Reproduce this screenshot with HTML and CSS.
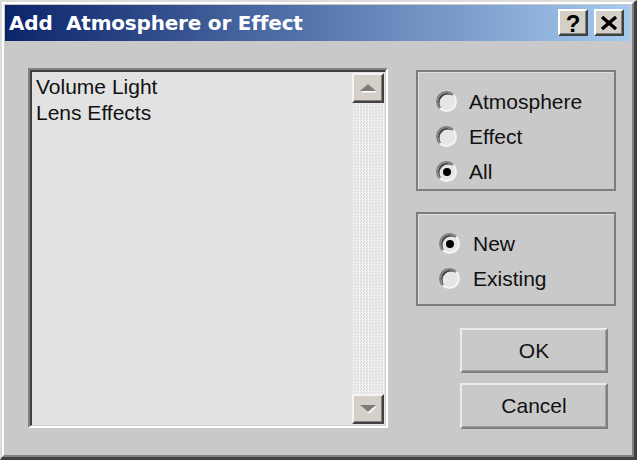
FILE: index.html
```html
<!DOCTYPE html>
<html>
<head>
<meta charset="utf-8">
<link rel="stylesheet" href="styles.css">
</head>
<body>
<div class="window">
  <div class="frame">
    <div class="titlebar">
      <span class="title">Add  Atmosphere or Effect</span>
      <div class="tbtns">
        <div class="tbtn help">?</div>
        <div class="tbtn close">
          <svg width="18" height="14" viewBox="0 0 18 14"><path d="M2 1 L16 13 M16 1 L2 13" stroke="#000" stroke-width="3.4" fill="none"/></svg>
        </div>
      </div>
    </div>
    <div class="body">
      <div class="listbox">
        <div class="listinner">
          <div class="items">
            <div class="item">Volume Light</div>
            <div class="item">Lens Effects</div>
          </div>
          <div class="scrollbar">
            <div class="sbtn">
              <svg width="18" height="9" viewBox="0 0 18 9"><polygon points="2,8.5 10,1.5 18,8.5" fill="#fff"/><polygon points="1,7 9,0 17,7" fill="#7c7c7c"/></svg>
            </div>
            <div class="track"></div>
            <div class="sbtn">
              <svg width="18" height="9" viewBox="0 0 18 9"><polygon points="2,1.5 18,1.5 10,8.5" fill="#fff"/><polygon points="1,0 17,0 9,7" fill="#7c7c7c"/></svg>
            </div>
          </div>
        </div>
      </div>
      <div class="side">
        <div class="group g1">
          <div class="row"><span class="radio"></span><span class="label">Atmosphere</span></div>
          <div class="row"><span class="radio"></span><span class="label">Effect</span></div>
          <div class="row"><span class="radio checked"></span><span class="label">All</span></div>
        </div>
        <div class="group g2">
          <div class="row"><span class="radio checked"></span><span class="label">New</span></div>
          <div class="row"><span class="radio"></span><span class="label">Existing</span></div>
        </div>
        <div class="btn ok">OK</div>
        <div class="btn cancel">Cancel</div>
      </div>
    </div>
  </div>
</div>
</body>
</html>
```
FILE: styles.css
```css
html, body {
  margin: 0;
  padding: 0;
  background: #c9c9c9;
}

.window {
  width: 637px;
  height: 460px;
  box-sizing: border-box;
  border-style: solid;
  border-width: 2px 3px 3px 2px;
  border-color: #dcdcdc #404040 #404040 #dcdcdc;
  background: #c9c9c9;
  font-family: "Liberation Sans", Arial, sans-serif;
  color: #000;
}

.frame {
  height: 100%;
  box-sizing: border-box;
  border: 2px solid;
  border-color: #ffffff #808080 #808080 #ffffff;
  padding: 1px 2px 0 1px;
  display: flex;
  flex-direction: column;
}

.titlebar {
  height: 36px;
  flex: none;
  display: flex;
  justify-content: space-between;
  align-items: flex-start;
  background: linear-gradient(to right, #0a246a, #a6caf0);
  padding: 0 6px 0 4px;
  box-sizing: border-box;
}

.title {
  font-family: "DejaVu Sans", Verdana, sans-serif;
  font-weight: bold;
  font-size: 20px;
  letter-spacing: -0.2px;
  line-height: 36px;
  color: #fff;
  white-space: pre;
}

.tbtns {
  display: flex;
  gap: 6px;
  margin-top: 4px;
}

.tbtn {
  width: 30px;
  height: 27px;
  box-sizing: border-box;
  background: #d4d0c8;
  border: 2px solid;
  border-color: #ffffff #404040 #404040 #ffffff;
  box-shadow: inset -1px -1px 0 #808080;
  display: flex;
  align-items: center;
  justify-content: center;
}

.help {
  font-family: "Liberation Sans", Arial, sans-serif;
  font-weight: bold;
  font-size: 24px;
  line-height: 22px;
  padding-top: 2px;
}

.body {
  flex: 1;
  display: flex;
  padding: 27px 0 0 23px;
}

.listbox {
  width: 360px;
  height: 360px;
  box-sizing: border-box;
  border: 2px solid;
  border-color: #808080 #ffffff #ffffff #808080;
  flex: none;
}

.listinner {
  height: 100%;
  box-sizing: border-box;
  border-style: solid;
  border-width: 2px 1px 1px 2px;
  border-color: #404040 #d4d0c8 #d4d0c8 #404040;
  background: #e2e2e2;
  display: flex;
}

.items {
  flex: 1;
  padding: 2px 0 0 4px;
  font-size: 21px;
  line-height: 26px;
  color: #111;
}

.scrollbar {
  width: 33px;
  box-sizing: border-box;
  padding: 1px 1px 1px 0;
  display: flex;
  flex-direction: column;
}

.sbtn {
  height: 30px;
  flex: none;
  box-sizing: border-box;
  background: #d4d0c8;
  border: 2px solid;
  border-color: #f4f4f4 #404040 #404040 #f4f4f4;
  box-shadow: inset -1px -1px 0 #808080;
  display: flex;
  align-items: center;
  justify-content: center;
}

.track {
  flex: 1;
  background-color: #e8e8e8;
  background-image: repeating-conic-gradient(#f2f2f2 0 25%, #dcdcdc 0 50%);
  background-size: 3px 3px;
}

.side {
  width: 200px;
  margin-left: 28px;
  margin-top: 2px;
  display: flex;
  flex-direction: column;
}

.group {
  box-sizing: border-box;
  border: 2px solid #7d7d7d;
  box-shadow: inset 1px 1px 0 #dedede;
}

.g1 {
  height: 121px;
  padding-top: 12px;
}

.g2 {
  height: 94px;
  margin-top: 21px;
  padding-top: 12px;
}

.row {
  height: 35px;
  display: flex;
  align-items: center;
}

.g1 .radio { margin-left: 18px; }
.g1 .label { margin-left: 12px; }
.g2 .radio { margin-left: 21px; }
.g2 .label { margin-left: 13px; }

.label {
  font-size: 21px;
  line-height: 35px;
  color: #111;
}

.radio {
  width: 21px;
  height: 21px;
  box-sizing: border-box;
  border-radius: 50%;
  border: 2px solid;
  border-color: #808080 #f4f4f4 #f4f4f4 #808080;
  box-shadow: inset 1.5px 1.5px 0 #404040;
  background: #e6e6e6;
  position: relative;
  flex: none;
}

.radio.checked::after {
  content: "";
  position: absolute;
  left: 4.5px;
  top: 4.5px;
  width: 8px;
  height: 8px;
  border-radius: 50%;
  background: #000;
}

.btn {
  width: 148px;
  margin-left: 44px;
  box-sizing: border-box;
  border: 2px solid;
  border-color: #ececec #808080 #808080 #ececec;
  box-shadow: inset -1px -1px 0 #a0a0a0;
  display: flex;
  align-items: center;
  justify-content: center;
  font-size: 21px;
  color: #111;
}

.ok {
  height: 45px;
  margin-top: 22px;
}

.cancel {
  height: 46px;
  margin-top: 10px;
}
```
